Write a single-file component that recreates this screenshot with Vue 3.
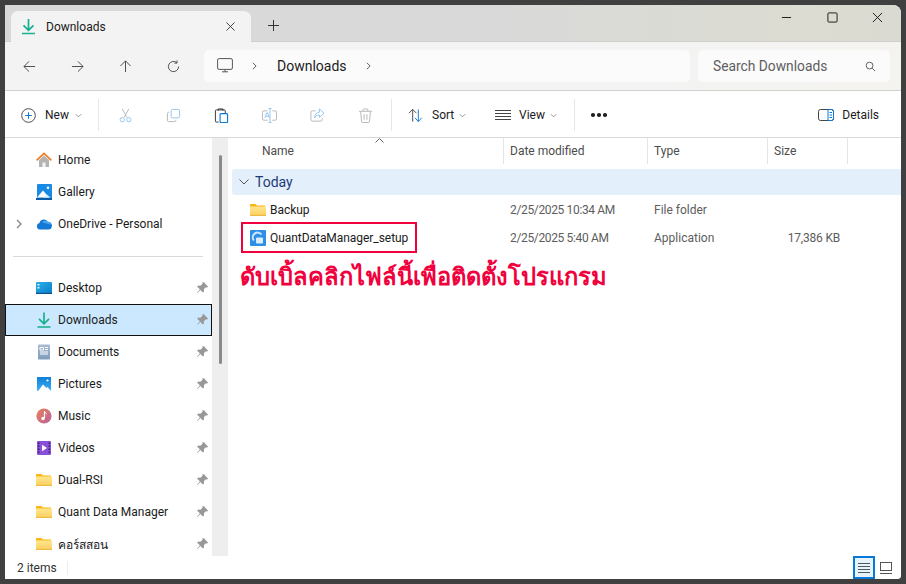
<template>
  <div class="screen">
    <svg class="sprite" width="0" height="0">
      <defs>
        <linearGradient id="folderFill" x1="0" y1="0" x2="0" y2="1">
          <stop offset="0" stop-color="#ffe68f" />
          <stop offset="1" stop-color="#fbcf5f" />
        </linearGradient>
        <linearGradient id="blueFill" x1="0" y1="0" x2="1" y2="1">
          <stop offset="0" stop-color="#29b0e8" />
          <stop offset="1" stop-color="#0c7ec9" />
        </linearGradient>
        <linearGradient id="skyFill" x1="0" y1="0" x2="0" y2="1">
          <stop offset="0" stop-color="#0f7fd8" />
          <stop offset="1" stop-color="#3fb0f2" />
        </linearGradient>
        <linearGradient id="docFill" x1="0" y1="0" x2="0" y2="1">
          <stop offset="0" stop-color="#a9bbd2" />
          <stop offset="1" stop-color="#7f9bbd" />
        </linearGradient>
        <linearGradient id="musicFill" x1="0" y1="0" x2="1" y2="1">
          <stop offset="0" stop-color="#e9815a" />
          <stop offset="1" stop-color="#b8629c" />
        </linearGradient>
        <symbol id="i-download" viewBox="1.500 0 13 16">
          <path d="M8 .5v11M3 6.800l5 5 5-5" fill="none" stroke="#17b08d" stroke-width="1.700" />
          <path d="M1.500 15h13" stroke="#1bb38f" stroke-width="1.600" />
        </symbol>
        <symbol id="i-home" viewBox="0 0 16 16">
          <path d="M3 8v7h10V8L8 3.500z" fill="#b3b3b3" />
          <path d="M6.400 15v-4.600h3.200V15z" fill="#f2f2f2" />
          <path d="M.6 8.300 8 1.300l7.400 7" fill="none" stroke="#ee7d22" stroke-width="1.700" />
        </symbol>
        <symbol id="i-gallery" viewBox="0 0 16 16">
          <rect x="1" y="0" width="15" height="15" rx="1" fill="#1a8be4" />
          <path d="M1 13.500l6-7 6 7z" fill="#fff" />
          <path d="M8 13.500l2.800-3 3.700 3z" fill="#dcefff" />
          <circle cx="12" cy="3.800" r="1.300" fill="#fff" />
          <rect x="0" y="14" width="16" height="2" fill="#0a5ca8" />
        </symbol>
        <symbol id="i-cloud" viewBox="0 0 16 16">
          <path d="M4 13.500a3.300 3.300 0 0 1-.6-6.500 4.500 4.500 0 0 1 8.300-1.200A3.900 3.900 0 0 1 15.800 10.800 3 3 0 0 1 13 13.500z" fill="#1479d6" />
          <path d="M6 6.200a4.500 4.500 0 0 1 5.700-.4 3.900 3.900 0 0 1 3.500 3z" fill="#4aa7ee" />
        </symbol>
        <symbol id="i-desktop" viewBox="0 0 16 16">
          <rect x="0" y="2" width="16" height="12" rx="1" fill="url(#blueFill)" />
          <rect x="1.500" y="4" width="2" height="1.500" fill="#dff3ff" />
          <rect x="1.500" y="7" width="2" height="1.500" fill="#dff3ff" />
          <rect x="0" y="12.800" width="16" height="1.200" fill="#0b4f8f" />
        </symbol>
        <symbol id="i-docs" viewBox="0 0 16 16">
          <rect x="2" y="0.500" width="12" height="15" rx="1" fill="url(#docFill)" />
          <path d="M4 3.500h3.500v2.500H4zM9 3.500h3M9 5.500h3M4 8h8M4 10h8" stroke="#fff" fill="none" stroke-width="1" />
        </symbol>
        <symbol id="i-pictures" viewBox="0 0 16 16">
          <rect x="1" y="1" width="14" height="14" fill="url(#skyFill)" />
          <path d="M1 15l1.500-.5L7 8.500l3.500 3.500 1-1L15 15z" fill="#fff" />
          <circle cx="11.500" cy="4.500" r="1.100" fill="#fff" />
        </symbol>
        <symbol id="i-music" viewBox="0 0 16 16">
          <circle cx="8" cy="8" r="7.600" fill="url(#musicFill)" />
          <path d="M8.500 3.500v6.500" stroke="#fff" stroke-width="1.200" />
          <circle cx="7" cy="10.500" r="1.700" fill="#fff" />
          <path d="M8.500 3.500c.5 1.300 1.700 1.500 2.300 2.500" stroke="#fff" fill="none" />
        </symbol>
        <symbol id="i-videos" viewBox="0 0 16 16">
          <rect x="1" y="1" width="14" height="14" rx="1" fill="#8a4fd8" />
          <path d="M2 2.500h1.500v1.500H2zM2 5.500h1.500V7H2zM2 8.500h1.500V10H2zM2 11.500h1.500V13H2zM12.500 2.500H14V4h-1.500zM12.500 5.500H14V7h-1.500zM12.500 8.500H14V10h-1.500zM12.500 11.500H14V13h-1.500z" fill="#3b1f75" />
          <path d="M6 4.800v6.400L11 8z" fill="#fff" />
        </symbol>
        <symbol id="i-folder" viewBox="0 0 16 16">
          <path d="M0 3a1 1 0 0 1 1-1h4.500l1.500 1.500h8v2H0z" fill="#f9b512" />
          <path d="M0 4.500h15a1 1 0 0 1 1 1V13a1 1 0 0 1-1 1H1a1 1 0 0 1-1-1z" fill="url(#folderFill)" />
          <path d="M0 13.400h16" stroke="#e9ae35" stroke-width=".8" />
        </symbol>
        <symbol id="i-pin" viewBox="0 0 12 12">
          <path d="M6.800 .8l4.400 4.400-1 .7-1-.2-2 2 .2 2-1 1-2.300-2.500L1 11l-.2-.2 2.800-3.200L1.100 5.200l1-1 2 .2 2-2-.1-1z" fill="#989898" />
        </symbol>
      </defs>
    </svg>

    <div class="window">
      <div class="titlebar">
        <div class="tab">
          <svg class="tab-icon"><use href="#i-download" /></svg>
          <span class="tab-title">Downloads</span>
          <svg class="tab-close" viewBox="0 0 10 10"><path d="M.5.500l9 9M9.500.500l-9 9" /></svg>
        </div>
        <svg class="tab-add" viewBox="0 0 11 11"><path d="M5.500 0v11M0 5.500h11" /></svg>
        <div class="win-controls">
          <svg viewBox="0 0 12 12"><path d="M1 6h10" /></svg>
          <svg viewBox="0 0 12 12"><rect x="1" y="1" width="10" height="10" rx="1" /></svg>
          <svg viewBox="0 0 12 12"><path d="M1 1l10 10M11 1L1 11" /></svg>
        </div>
      </div>

      <div class="navbar">
        <div class="nav-buttons">
          <svg viewBox="0 0 14 14"><path d="M13 7H1M6.500 1.500L1 7l5.500 5.500" /></svg>
          <svg viewBox="0 0 14 14"><path d="M1 7h12M7.500 1.500L13 7l-5.500 5.500" /></svg>
          <svg viewBox="0 0 14 14"><path d="M7 13V1M1.500 6.500L7 1l5.500 5.500" /></svg>
          <svg viewBox="0 0 14 14"><path d="M12.500 7A5.500 5.500 0 1 1 10.500 2.800M10.800 .5v2.800H8" /></svg>
        </div>
        <div class="address">
          <svg class="pc-icon" viewBox="0 0 16 16">
            <rect x=".6" y=".6" width="14.800" height="10.800" rx="1.500" />
            <path d="M5 13.800h6M8 11.500v2.300" />
          </svg>
          <svg class="crumb-arrow" viewBox="0 0 6 10"><path d="M1 1l4 4-4 4" /></svg>
          <span class="crumb">Downloads</span>
          <svg class="crumb-arrow last" viewBox="0 0 6 10"><path d="M1 1l4 4-4 4" /></svg>
        </div>
        <div class="search">
          <span>Search Downloads</span>
          <svg viewBox="0 0 12 12"><circle cx="5" cy="5" r="3.700" /><path d="M7.800 7.800L11 11" /></svg>
        </div>
      </div>

      <div class="commands">
        <div class="cmd cmd-new">
          <svg class="ic15" viewBox="0 0 16 16">
            <circle cx="8" cy="8" r="7.300" stroke="#444" fill="none" />
            <path d="M8 4.500v7M4.500 8h7" stroke="#0a6cc9" />
          </svg>
          <span>New</span>
          <svg class="chev" viewBox="0 0 8 5"><path d="M1 1l3 3 3-3" /></svg>
        </div>
        <i class="cmd-sep"></i>
        <div class="cmd-icons">
          <svg viewBox="0 0 16 16">
            <path d="M4.500 1l5 9M11.500 1l-5 9" stroke="#b5b5b5" fill="none" />
            <circle cx="4.500" cy="12.500" r="2.300" stroke="#8fc3ee" fill="none" />
            <circle cx="11.500" cy="12.500" r="2.300" stroke="#8fc3ee" fill="none" />
          </svg>
          <svg viewBox="0 0 16 16">
            <rect x="5.500" y="1.500" width="9" height="9" rx="1.500" stroke="#8fc3ee" fill="none" />
            <path d="M3.500 4.500H3A1.500 1.500 0 0 0 1.500 6v7A1.500 1.500 0 0 0 3 14.500h6a1.500 1.500 0 0 0 1.500-1.500v-.5" stroke="#b5b5b5" fill="none" />
          </svg>
          <svg viewBox="0 0 16 16">
            <path d="M5 15H2.500a1 1 0 0 1-1-1V3a1 1 0 0 1 1-1H11a1 1 0 0 1 1 1v2.500M4.500 3V1h5v2" stroke="#333" fill="none" />
            <rect x="6.500" y="6" width="8" height="9.500" rx="1" stroke="#0a78d6" fill="none" stroke-width="1.200" />
          </svg>
          <svg viewBox="0 0 16 16">
            <path d="M6 3H2a1.500 1.500 0 0 0-1.500 1.500v7A1.500 1.500 0 0 0 2 13h4M11 3h3a1.500 1.500 0 0 1 1.500 1.500v7A1.500 1.500 0 0 1 14 13h-3" stroke="#b5b5b5" fill="none" />
            <path d="M8.500 .5v15M6.800 .5h3.400M6.800 15.500h3.400" stroke="#8fc3ee" fill="none" />
            <path d="M3 10.500L5.200 5h.6l2.200 5.500M3.800 8.800h3.400" stroke="#8fc3ee" fill="none" />
          </svg>
          <svg viewBox="0 0 16 16">
            <path d="M6 3H2.500A1.500 1.500 0 0 0 1 4.500v8A1.500 1.500 0 0 0 2.500 14h9a1.500 1.500 0 0 0 1.500-1.500V11" stroke="#b5b5b5" fill="none" />
            <path d="M10 1l5 4.500-5 4.500V7.500c-2.500 0-4 .8-5 3 0-3.500 2-6 5-6z" stroke="#8fc3ee" fill="none" />
          </svg>
          <svg viewBox="0 0 16 16">
            <path d="M1 3.500h14M5.500 3.500V2a1 1 0 0 1 1-1h3a1 1 0 0 1 1 1v1.500M2.800 3.500l.9 10.500a1.500 1.500 0 0 0 1.500 1.500h5.600a1.500 1.500 0 0 0 1.500-1.500l.9-10.500M6.500 6.500v6M9.500 6.500v6" stroke="#b5b5b5" fill="none" />
          </svg>
        </div>
        <i class="cmd-sep"></i>
        <div class="cmd cmd-sort">
          <svg class="ic15" viewBox="0 0 16 16">
            <path d="M5 14.500V1.500M1 5.500l4-4 4 4" stroke="#444" fill="none" />
            <path d="M11 1.500v13M7.500 10.500l3.500 4 3.500-4" stroke="#0a78d6" fill="none" />
          </svg>
          <span>Sort</span>
          <svg class="chev" viewBox="0 0 8 5"><path d="M1 1l3 3 3-3" /></svg>
        </div>
        <div class="cmd cmd-view">
          <svg class="ic15 wide" viewBox="0 0 16 11">
            <path d="M0 .5h16M0 3.500h16M0 6.500h16M0 9.500h16" stroke="#444" fill="none" />
          </svg>
          <span>View</span>
          <svg class="chev" viewBox="0 0 8 5"><path d="M1 1l3 3 3-3" /></svg>
        </div>
        <i class="cmd-sep"></i>
        <div class="more"><b></b><b></b><b></b></div>
        <div class="cmd cmd-details">
          <svg class="details-icon" viewBox="0 0 16 12">
            <rect x=".5" y=".5" width="15" height="11" rx="2" stroke="#444" fill="none" />
            <path d="M10 .5h3.500a2 2 0 0 1 2 2v7a2 2 0 0 1-2 2H10zM11.500 3.500h2.500M11.500 6h2.500M11.500 8.500h2.500" stroke="#0a78d6" fill="none" />
          </svg>
          <span>Details</span>
        </div>
      </div>

      <div class="body">
        <aside class="sidebar">
          <div class="nav-list">
            <div v-for="item in topItems" :key="item.label" class="nav-row">
              <svg v-if="item.expand" class="expander" viewBox="0 0 6 10"><path d="M1 1l4 4-4 4" /></svg>
              <svg class="nav-icon"><use :href="'#' + item.icon" /></svg>
              <span>{{ item.label }}</span>
            </div>
            <div class="nav-divider"></div>
            <div
              v-for="item in pinnedItems"
              :key="item.label"
              class="nav-row"
              :class="{ selected: item.selected }"
            >
              <svg class="nav-icon"><use :href="'#' + item.icon" /></svg>
              <span>{{ item.label }}</span>
              <svg class="pin"><use href="#i-pin" /></svg>
            </div>
          </div>
          <div class="side-scroll"><div class="side-thumb"></div></div>
        </aside>

        <main class="files">
          <svg class="sort-caret" viewBox="0 0 9 5"><path d="M.5 4.500l4-4 4 4" /></svg>
          <div class="file-head">
            <div v-for="col in columns" :key="col" class="head-cell">{{ col }}</div>
          </div>
          <div class="group">
            <svg viewBox="0 0 10 6"><path d="M.5.500L5 5 9.500.500" /></svg>
            <span>Today</span>
          </div>
          <div v-for="file in files" :key="file.name" class="file-row">
            <div class="file-name">
              <svg v-if="file.kind === 'folder'" class="file-icon"><use href="#i-folder" /></svg>
              <svg v-else class="file-icon" viewBox="0 0 16 16">
                <rect width="16" height="16" rx="1" fill="#2d8fe8" />
                <path d="M3.800 10.500A4.700 4.700 0 0 1 11.500 4.500" stroke="#cfe7fc" stroke-width="2" fill="none" />
                <rect x="6" y="7.500" width="7" height="6" rx="1" fill="#dcedfc" />
              </svg>
              <span>{{ file.name }}</span>
            </div>
            <div class="file-meta date">{{ file.date }}</div>
            <div class="file-meta">{{ file.type }}</div>
            <div class="file-meta size">{{ file.size }}</div>
          </div>

          <div class="callout-box"></div>
          <div class="callout-text">ดับเบิ้ลคลิกไฟล์นี้เพื่อติดตั้งโปรแกรม</div>
        </main>
      </div>

      <div class="statusbar">
        <span class="count">2 items</span>
        <i class="status-sep"></i>
        <div class="view-toggle active">
          <svg viewBox="0 0 12 10"><path d="M0 .5h12M0 3.500h12M0 6.500h12M0 9.500h12" /></svg>
        </div>
        <div class="view-toggle plain">
          <svg viewBox="0 0 12 12"><rect x=".5" y=".5" width="11" height="8" /><path d="M0 11.500h12" /></svg>
        </div>
      </div>
    </div>
  </div>
</template>

<script setup>
const topItems = [
  { label: 'Home', icon: 'i-home' },
  { label: 'Gallery', icon: 'i-gallery' },
  { label: 'OneDrive - Personal', icon: 'i-cloud', expand: true }
]

const pinnedItems = [
  { label: 'Desktop', icon: 'i-desktop' },
  { label: 'Downloads', icon: 'i-download', selected: true },
  { label: 'Documents', icon: 'i-docs' },
  { label: 'Pictures', icon: 'i-pictures' },
  { label: 'Music', icon: 'i-music' },
  { label: 'Videos', icon: 'i-videos' },
  { label: 'Dual-RSI', icon: 'i-folder' },
  { label: 'Quant Data Manager', icon: 'i-folder' },
  { label: 'คอร์สสอน', icon: 'i-folder' }
]

const columns = ['Name', 'Date modified', 'Type', 'Size']

const files = [
  { name: 'Backup', kind: 'folder', date: '2/25/2025 10:34 AM', type: 'File folder', size: '' },
  { name: 'QuantDataManager_setup', kind: 'app', date: '2/25/2025 5:40 AM', type: 'Application', size: '17,386 KB' }
]
</script>

<style>
html, body {
  margin: 0;
  background: #404040;
}
</style>

<style scoped>
.screen {
  width: 906px;
  height: 584px;
  padding: 5px;
  box-sizing: border-box;
  background: #404040;
  font-family: Roboto, "Noto Sans", "Liberation Sans", sans-serif;
  font-size: 12px;
  color: #1b1b1b;
  overflow: hidden;
}

.sprite {
  position: absolute;
}

.window {
  width: 896px;
  height: 574px;
  display: flex;
  flex-direction: column;
  background: #fff;
  border-radius: 0 8px 4px 0;
  overflow: hidden;
}

/* title bar */
.titlebar {
  height: 37px;
  flex: none;
  display: flex;
  align-items: flex-end;
  padding-left: 6px;
  box-sizing: border-box;
  background: linear-gradient(90deg, #d9d9d9, #d9d9d9 55%, #dcdcd2 90%, #dadad2);
  border-bottom: 1px solid #cfcfcb;
}

.tab {
  width: 240px;
  height: 31px;
  margin-bottom: -1px;
  display: flex;
  align-items: center;
  box-sizing: border-box;
  padding: 0 16px 0 11px;
  background: #f3f3f3;
  border-radius: 7px 7px 0 0;
}

.tab-icon {
  width: 13px;
  height: 17px;
  margin-right: 11px;
}

.tab-title {
  flex: 1;
}

.tab-close {
  width: 9px;
  height: 9px;
  stroke: #333;
  fill: none;
}

.tab-add {
  width: 11px;
  height: 11px;
  margin: 0 0 10px 17px;
  stroke: #333;
  fill: none;
}

.win-controls {
  margin-left: auto;
  align-self: flex-start;
  display: flex;
  gap: 34.5px;
  padding: 7px 18px 0 0;
}

.win-controls svg {
  width: 11px;
  height: 11px;
  stroke: #111;
  fill: none;
}

/* nav bar */
.navbar {
  height: 49px;
  flex: none;
  display: flex;
  align-items: center;
  box-sizing: border-box;
  padding: 0 11px 0 0;
  background: linear-gradient(90deg, #f3f3f3, #f3f3f3 70%, #f4f3ef);
  border-bottom: 1px solid #d0d0cc;
}

.nav-buttons {
  width: 199px;
  display: flex;
  gap: 35px;
  padding-left: 18px;
  box-sizing: border-box;
}

.nav-buttons svg {
  width: 13px;
  height: 13px;
  stroke: #444;
  fill: none;
}

.address {
  width: 486px;
  height: 32px;
  display: flex;
  align-items: center;
  padding-left: 13px;
  box-sizing: border-box;
  background: #fbfbfb;
  border-radius: 5px;
  font-size: 14px;
}

.pc-icon {
  width: 16px;
  height: 16px;
  stroke: #555;
  fill: none;
}

.crumb-arrow {
  width: 5px;
  height: 8px;
  margin: 0 20px 0 19px;
  stroke: #333;
  fill: none;
}

.crumb {
  width: 69px;
}

.crumb-arrow.last {
  margin-left: 20px;
}

.search {
  width: 192px;
  height: 32px;
  margin-left: 8px;
  display: flex;
  align-items: center;
  justify-content: space-between;
  padding: 0 14px 0 15px;
  box-sizing: border-box;
  background: #fbfbfb;
  border-radius: 5px;
  font-size: 13.8px;
  color: #5e5e5e;
}

.search svg {
  width: 11px;
  height: 11px;
  stroke: #555;
  fill: none;
}

/* command bar */
.commands {
  height: 47px;
  flex: none;
  display: flex;
  align-items: center;
  box-sizing: border-box;
  padding-top: 2px;
  border-bottom: 1px solid #d9d9d9;
  background: #fff;
}

.cmd {
  display: flex;
  align-items: center;
}

.ic15 {
  width: 15px;
  height: 15px;
  flex: none;
}

.ic15.wide {
  width: 16px;
  height: 11px;
}

.chev {
  width: 7px;
  height: 5px;
  stroke: #888;
  fill: none;
}

.cmd-new {
  width: 93px;
  padding-left: 16px;
  box-sizing: border-box;
}

.cmd-new span {
  width: 25px;
  margin: 0 5px 0 9px;
}

.cmd-sep {
  width: 1px;
  height: 32px;
  flex: none;
  background: #e6e6e6;
}

.cmd-icons {
  width: 292px;
  display: flex;
  gap: 33px;
  padding-left: 19px;
  box-sizing: border-box;
}

.cmd-icons svg {
  width: 15px;
  height: 15px;
}

.cmd-sort {
  width: 71px;
  margin-left: 16px;
}

.cmd-sort span {
  width: 22px;
  margin: 0 5px 0 9px;
}

.cmd-view {
  width: 63px;
  margin-left: 16px;
}

.cmd-view span {
  width: 26px;
  margin: 0 5px 0 8px;
}

.cmd-view + .cmd-sep {
  margin-left: 16px;
}

.more {
  display: flex;
  gap: 2.5px;
  margin-left: 16px;
}

.more b {
  width: 3.500px;
  height: 3.500px;
  border-radius: 50%;
  background: #222;
}

.cmd-details {
  margin-left: auto;
  padding-right: 22px;
}

.details-icon {
  width: 16px;
  height: 12px;
  margin-right: 8px;
}

/* main area */
.body {
  flex: 1;
  min-height: 0;
  display: flex;
}

.sidebar {
  width: 223px;
  flex: none;
  display: flex;
  overflow: hidden;
}

.nav-list {
  width: 207px;
  flex: none;
  padding-top: 6px;
  box-sizing: border-box;
  overflow: hidden;
}

.nav-row {
  position: relative;
  height: 32px;
  display: flex;
  align-items: center;
  box-sizing: border-box;
  padding-left: 31px;
  white-space: nowrap;
}

.nav-row.selected {
  background: #cce8ff;
  outline: 1px solid #111;
  outline-offset: -1px;
}

.nav-icon {
  width: 16px;
  height: 16px;
  margin-right: 6px;
  flex: none;
}

.expander {
  position: absolute;
  left: 11px;
  top: 11px;
  width: 6px;
  height: 10px;
  stroke: #888;
  stroke-width: 1.400;
  fill: none;
}

.pin {
  position: absolute;
  right: 3px;
  top: 9px;
  width: 13px;
  height: 13px;
}

.nav-divider {
  height: 1px;
  margin: 16px 9px 15px 8px;
  background: #d9d9d9;
}

.side-scroll {
  width: 16px;
  flex: none;
  background: #eeeeee;
  padding: 17px 0 0 7px;
  box-sizing: border-box;
}

.side-thumb {
  width: 3px;
  height: 209px;
  border-radius: 2px;
  background: #8a8a8a;
}

.files {
  position: relative;
  flex: 1;
  min-width: 0;
}

.sort-caret {
  position: absolute;
  left: 147px;
  top: 0;
  width: 9px;
  height: 5px;
  stroke: #666;
  fill: none;
}

.file-head,
.file-row {
  display: grid;
  grid-template-columns: 276px 144px 120px 80px;
}

.file-head {
  height: 26px;
  color: #4c4c4c;
}

.head-cell {
  display: flex;
  align-items: center;
  padding-left: 6px;
  border-right: 1px solid #e5e5e5;
}

.head-cell:first-child {
  padding-left: 34px;
}

.group {
  height: 26px;
  margin: 5px 0 1px 4px;
  display: flex;
  align-items: center;
  padding-left: 7px;
  box-sizing: border-box;
  background: #e3f0fb;
  border-radius: 3px 0 0 3px;
  font-size: 14px;
  color: #1f3a78;
}

.group svg {
  width: 10px;
  height: 6px;
  margin-right: 6px;
  stroke: #555;
  fill: none;
}

.file-row {
  height: 28px;
  align-items: center;
}

.file-name {
  display: flex;
  align-items: center;
  padding-left: 22px;
  letter-spacing: -0.05px;
}

.file-icon {
  width: 16px;
  height: 16px;
  margin-right: 4px;
  flex: none;
}

.file-meta {
  padding-left: 6px;
  color: #5d5d5d;
}

.file-meta.date {
  letter-spacing: -0.35px;
}

.file-meta.size {
  text-align: right;
  padding-right: 8px;
  letter-spacing: -0.2px;
}

/* red annotation drawn over the screenshot */
.callout-box {
  position: absolute;
  left: 13px;
  top: 84px;
  width: 176px;
  height: 31px;
  box-sizing: border-box;
  border: 2px solid #f0003c;
}

.callout-text {
  position: absolute;
  left: 12px;
  top: 120px;
  font-size: 23.7px;
  font-weight: 700;
  line-height: 38px;
  color: #f0003c;
  white-space: nowrap;
}

/* status bar */
.statusbar {
  height: 23px;
  flex: none;
  display: flex;
  align-items: center;
  padding-left: 12px;
  background: #fff;
  color: #333;
}

.status-sep {
  width: 1px;
  height: 14px;
  margin-left: 10px;
  background: #eeeeee;
}

.view-toggle {
  height: 23px;
  display: flex;
  align-items: center;
  justify-content: center;
  box-sizing: border-box;
}

.view-toggle svg {
  width: 12px;
  height: 12px;
  stroke: #555;
  fill: none;
}

.view-toggle.active {
  width: 22px;
  margin-left: auto;
  border: 2px solid #0a78d6;
  background: #e5f3fb;
}

.view-toggle.plain {
  width: 12px;
  margin: 0 9px 0 5px;
}
</style>
